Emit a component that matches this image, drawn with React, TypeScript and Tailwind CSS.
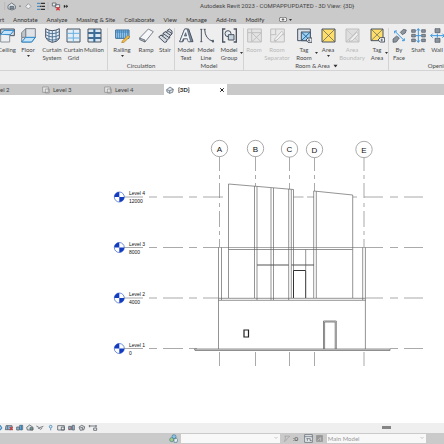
import type { ReactNode } from "react"
import { X } from "lucide-react"

type Tool = {
    label: string[]
    width: string
    icon: ReactNode
    arrow?: "below" | "side"
    disabled?: boolean
}

const Svg = ({ children }: { children: ReactNode }) => (
    <svg viewBox="0 0 45 45" className="size-[15px] shrink-0" fill="none" stroke="#4b5563" strokeWidth="3" aria-hidden="true">
        {children}
    </svg>
)

const CeilingIcon = () => (
    <Svg>
        <path d="M2 3h41v20H2z" fill="#d5dbe1" />
        <path d="M12 7h30L31 20H2z" fill="#c5e4fa" stroke="#2583c9" />
        <path d="M2 20v22h27V22" fill="#eef0f2" stroke="#8b929a" />
    </Svg>
)

const FloorIcon = () => (
    <Svg>
        <path d="M14 2h29v26L32 42H2V29l12-3z" fill="#dfe3e7" stroke="#7d858e" />
        <path d="M14 2v26H2V14z" fill="#bfc5cb" stroke="#7d858e" />
        <path d="M14 28h29L32 42H2z" fill="#c5e4fa" stroke="#2583c9" />
    </Svg>
)

const CurtainSystemIcon = () => (
    <Svg>
        <path d="M2 2q19 12 41 0v30q-8 11-22 11Q6 40 2 28z" fill="#e4eef7" />
        <path d="M12 6v32M22 8v35M33 6v34M2 11q19 12 41 0M2 20q19 13 41 1M4 30q17 12 38 1" stroke="#3f6487" strokeWidth="2.5" />
    </Svg>
)

const CurtainGridIcon = () => (
    <Svg>
        <path d="M3 3h39v39H3z" fill="#e3edf5" />
        <path d="M22 3v39M3 16h39M3 30h39" stroke="#68afe0" />
    </Svg>
)

const MullionIcon = () => (
    <Svg>
        <path d="M3 3h39v39H3z" fill="#dce8f1" />
        <path d="M22 3v39" stroke="#2e6c9e" strokeWidth="6" />
        <path d="M3 15h39M3 30h39" stroke="#486078" strokeWidth="6" />
        <path d="M5 15h35M5 30h35" stroke="#318ad0" strokeWidth="2" />
    </Svg>
)

const RailingIcon = () => (
    <Svg>
        <path d="M2 6h40v25H2z" fill="#9fcbed" stroke="#386a95" />
        <path d="M8 6v25M14 6v25M20 6v25M26 6v25M32 6v25M38 6v25M2 12h40" stroke="#377eb5" strokeWidth="2.5" />
        <path d="m22 39 17-17 5 5-17 16-7 1z" fill="#f4bd45" stroke="#a57a25" strokeWidth="2" />
    </Svg>
)

const RampIcon = () => (
    <Svg>
        <path d="M2 30 28 3l15 8-25 31z" fill="#f6f7f8" stroke="#7d858e" />
        <path d="m2 30 16 6v6L2 35z" fill="#aab3bd" strokeWidth="2" />
    </Svg>
)

const StairIcon = () => (
    <Svg>
        <path d="m2 27 7-6 6 3v-8l7-5 5 3V8l7-5 8 6v9l-7 6v6l-7 5-3 7-6 1z" fill="#d4dae0" />
        <path d="m9 21 17 13M15 16l18 13M22 11l17 12M28 7l14 10" />
    </Svg>
)

const ModelTextIcon = () => (
    <Svg>
        <path d="M2 41 17 3h12l13 38H30l-2-9H15l-3 9z" fill="#7a8c9f" />
        <path d="M2 41 17 3h7l11 38h-8l-2-9H13l-4 9zM16 24h7l-3-10z" fill="#f1f5f8" strokeWidth="2" />
    </Svg>
)

const ModelLineIcon = () => (
    <Svg>
        <path d="M7 4v37M17 4q1 30 26 36" />
        <path d="M4 4h6M4 41h6M14 4h6M40 37h4v5h-4z" />
    </Svg>
)

const ModelGroupIcon = () => (
    <Svg>
        <path d="M10 3H2v39h8M35 3h8v39h-8" strokeWidth="4" />
        <circle cx="18" cy="17" r="9" fill="#e5ebf0" />
        <path d="M19 20h17v16H19z" fill="#c8d4de" />
    </Svg>
)

const RoomIcon = () => (
    <Svg>
        <g stroke="#bfbfbf">
            <path d="M2 3h41v39H2z" fill="#e4e4e4" />
            <path d="M14 3v39M2 14h12M14 14h29M15 15l27 26M42 15 15 41" />
        </g>
    </Svg>
)

const RoomSeparatorIcon = () => (
    <Svg>
        <g stroke="#bfbfbf">
            <path d="M2 3h41v39H2z" fill="#e8e8e8" />
            <path d="M17 3v17M2 20h17M27 20h16M17 30v12" />
            <path d="m15 32 20-22 6 5-20 21-8 3z" fill="#f4f4f4" />
        </g>
    </Svg>
)

const TagRoomIcon = () => (
    <Svg>
        <path d="M2 3h38v35H2z" fill="#dce2e7" />
        <path d="M13 12h27v26H13z" fill="#9bd1f5" />
        <path d="m13 12 27 26M40 12 13 38" stroke="#286590" />
        <path d="m27 36 6-6h12v13H33z" fill="#f5f5f5" />
        <circle cx="36" cy="37" r="2" />
    </Svg>
)

const AreaIcon = () => (
    <Svg>
        <path d="M3 3h39v39H3z" fill="#ffdf69" />
        <path d="m3 3 39 39M42 3 3 42" strokeWidth="2" />
    </Svg>
)

const AreaBoundaryIcon = () => (
    <Svg>
        <g stroke="#bfbfbf">
            <path d="M3 3h39v39H3z" fill="#dedede" />
            <path d="m3 3 39 39M42 3 3 42" strokeWidth="2" />
            <path d="m15 34 20-21 6 5-19 20-9 3z" fill="#f2f2f2" />
        </g>
    </Svg>
)

const TagAreaIcon = () => (
    <Svg>
        <path d="M3 3h36v35H3z" fill="#ffdf69" />
        <path d="m3 3 36 35M39 3 3 38" strokeWidth="2" />
        <path d="m24 36 7-7h13v13H31z" fill="#f5f5f5" />
        <circle cx="35" cy="36" r="2" />
    </Svg>
)

const ByFaceIcon = () => (
    <Svg>
        <path d="m25 13 9-9 9 2-3 9-9 5zM3 33l11-9 8 6-9 12-10 1z" fill="#8c949c" strokeWidth="2" />
        <path d="m9 10 27 27M8 9h7M8 9v7M37 38h-7M37 38v-7" stroke="#3a96df" />
    </Svg>
)

const ShaftIcon = () => (
    <Svg>
        <path d="M2 5h11v8H2zM2 19h11v8H2zM2 33h11v8H2zM32 5h11v8H32zM32 19h11v8H32zM32 33h11v8H32z" fill="#8c949c" strokeWidth="2" />
        <path d="M22 2v41M17 8l5-6 5 6M17 37l5 6 5-6M14 23h17" stroke="#3a96df" />
    </Svg>
)

const WallIcon = () => (
    <Svg>
        <path d="M15 2h15v12H15zM15 31h15v12H15z" fill="#8c949c" strokeWidth="2" />
        <path d="M2 23h41M8 17l-6 6 6 6M37 17l6 6-6 6M22 17v12" stroke="#3a96df" />
    </Svg>
)

const build: Tool[] = [
    { label: ["Ceiling"], width: "w-[22px]", icon: <CeilingIcon /> },
    { label: ["Floor"], width: "w-5", icon: <FloorIcon />, arrow: "below" },
    { label: ["Curtain", "System"], width: "w-7", icon: <CurtainSystemIcon /> },
    { label: ["Curtain", "Grid"], width: "w-[15px]", icon: <CurtainGridIcon /> },
    { label: ["Mullion"], width: "w-[26px]", icon: <MullionIcon /> },
]

const circulation: Tool[] = [
    { label: ["Railing"], width: "w-7", icon: <RailingIcon />, arrow: "below" },
    { label: ["Ramp"], width: "w-5", icon: <RampIcon /> },
    { label: ["Stair"], width: "w-[18px]", icon: <StairIcon /> },
]

const model: Tool[] = [
    { label: ["Model", "Text"], width: "w-[22px]", icon: <ModelTextIcon /> },
    { label: ["Model", "Line"], width: "w-[18px]", icon: <ModelLineIcon /> },
    { label: ["Model", "Group"], width: "w-7", icon: <ModelGroupIcon />, arrow: "side" },
]

const roomArea: Tool[] = [
    { label: ["Room"], width: "w-5", icon: <RoomIcon />, disabled: true },
    { label: ["Room", "Separator"], width: "w-[26px]", icon: <RoomSeparatorIcon />, disabled: true },
    { label: ["Tag", "Room"], width: "w-7", icon: <TagRoomIcon />, arrow: "side" },
    { label: ["Area"], width: "w-5", icon: <AreaIcon />, arrow: "below" },
    { label: ["Area", "Boundary"], width: "w-7", icon: <AreaBoundaryIcon />, disabled: true },
    { label: ["Tag", "Area"], width: "w-[22px]", icon: <TagAreaIcon />, arrow: "side" },
]

const opening: Tool[] = [
    { label: ["By", "Face"], width: "w-5", icon: <ByFaceIcon /> },
    { label: ["Shaft"], width: "w-[18px]", icon: <ShaftIcon /> },
    { label: ["Wall"], width: "w-5", icon: <WallIcon /> },
    { label: ["Vertical"], width: "w-[42px]", icon: <ShaftIcon /> },
]

function Arrow({ className = "" }: { className?: string }) {
    return (
        <svg viewBox="0 0 6 4" className={`h-[2px] w-[3px] ${className}`} fill="#333" aria-hidden="true">
            <path d="M0 0h6L3 4z" />
        </svg>
    )
}

function ToolButton({ tool }: { tool: Tool }) {
    return (
        <button
            type="button"
            disabled={tool.disabled}
            className={`relative flex shrink-0 flex-col items-center ${tool.width} ${tool.disabled ? "text-[#b9b9b9]" : "text-[#4a4a4a]"}`}
        >
            {tool.icon}
            <span className="mt-[3px] flex flex-col items-center whitespace-nowrap">
                {tool.label.map((line) => (
                    <span key={line}>{line}</span>
                ))}
            </span>
            {tool.arrow === "below" && <Arrow className="mt-px" />}
            {tool.arrow === "side" && <Arrow className="absolute right-0 top-6" />}
        </button>
    )
}

function Panel({ title, tools, more }: { title: string; tools: Tool[]; more?: boolean }) {
    return (
        <section className="flex shrink-0 flex-col border-r border-[#d3d3d3]">
            <div className="flex h-[35px] items-start">
                {tools.map((tool) => (
                    <ToolButton key={tool.label.join(" ")} tool={tool} />
                ))}
            </div>
            <h2 className="flex h-2 items-center justify-center gap-1 text-[#4a4a4a]">
                {title}
                {more && <Arrow className="scale-150" />}
            </h2>
        </section>
    )
}

function QuickAccess() {
    return (
        <svg viewBox="0 0 210 36" className="h-3 w-[70px] shrink-0" fill="none" stroke="#59636e" strokeWidth="2.5" aria-hidden="true">
            <path d="M14 6v24M144 6v24" stroke="#aaa" strokeWidth="1.5" />
            <path d="m24 17 11-8 11 8v9l-10 4-12-4z" fill="#e4e9ed" />
            <path d="M30 19h11v7H30z" fill="#7e91a2" />
            <path d="M57 17h6l-3 4z" fill="#444" stroke="none" />
            <path d="m77 19 8-8 8 8-8 8z" fill="#f0f0f0" stroke="#8d949b" />
            <path d="M111 10h9M111 19h9M111 28h9" stroke="#3a83bd" strokeWidth="3" />
            <path d="M122 10h13M124 19h-4M125 19h10M122 28h13" stroke="#333" strokeWidth="4" />
            <path d="M157 9h11v9h-11zM166 14h13v9h-13z" fill="#eee" />
            <path d="m169 22 10 9M179 22l-10 9" stroke="#d9383d" strokeWidth="4" />
            <path d="m192 15 5 4-5 4zM199 15l5 4-5 4z" fill="#222" stroke="#222" strokeWidth="1" />
        </svg>
    )
}

const menu = ["Insert", "Annotate", "Analyze", "Massing & Site", "Collaborate", "View", "Manage", "Add-Ins", "Modify"]

const sheets = ["Level 2", "Level 3", "Level 4"]

const levels = [
    { name: "Level 4", elevation: "12000", y: 197 },
    { name: "Level 3", elevation: "8000", y: 247.5 },
    { name: "Level 2", elevation: "4000", y: 298 },
    { name: "Level 1", elevation: "0", y: 348.5 },
]

const grids = [
    { name: "A", x: 219.5, y: 148.5 },
    { name: "B", x: 255.5, y: 148.5 },
    { name: "C", x: 289.5, y: 149 },
    { name: "D", x: 314.5, y: 149.5 },
    { name: "E", x: 364, y: 149.5 },
]

function Elevation() {
    return (
        <svg viewBox="0 95 444 328" className="w-full" fill="none" stroke="#858585" strokeWidth="0.7" role="img" aria-label="3D view">
            {levels.map(({ name, elevation, y }) => (
                <g key={name}>
                    <path d={`M124 ${y}h19M149 ${y}h8M163 ${y}h20M189 ${y}h8M390 ${y}h8M404 ${y}h19`} />
                    <circle cx="119.3" cy={y} r="5" fill="#fff" stroke="#3b62c9" />
                    <path
                        d={`M119.3 ${y}v-5a5 5 0 0 0-5 5zM119.3 ${y}v5a5 5 0 0 0 5-5z`}
                        fill="#123cc0"
                        stroke="none"
                    />
                    <g fill="#111" stroke="none" fontSize="5" fontFamily="Liberation Sans, Arial, sans-serif">
                        <text x="129" y={y - 2}>{name}</text>
                        <text x="129" y={y + 6}>{elevation}</text>
                    </g>
                </g>
            ))}
            <path d="M203 197h20M293.5 197h10M307 197h7M353 197h4M364 197h19M203 247.5h180M203 298h15M366 298h17" />

            {grids.map(({ name, x, y }) => (
                <g key={name}>
                    <circle cx={x} cy={y} r="8.2" />
                    <path d={`M${x} ${y + 8.2}V171M${x} 175v4M${x} 352v14`} />
                    <text x={x} y={y + 3} textAnchor="middle" fill="#111" stroke="none" fontSize="8" fontFamily="Liberation Sans, Arial, sans-serif">
                        {name}
                    </text>
                </g>
            ))}
            <path d="M219.5 183v15M219.5 203v4M219.5 211v16M219.5 231v4M219.5 239v8M364 183v15M364 203v4M364 211v16M364 231v4M364 239v8" />
            <path d="M255.5 183v3M289.5 183v6M314.5 183v8" />

            {/* upper volumes */}
            <path d="M228.5 298V184l65 5.5V298M254.5 186v112M257 186.5V300M271 188v112M273.5 188v112M288.7 189v111M291.3 189.5V298" stroke="#666" />
            <path d="M313.7 298V191l39 4v103M316.3 191.3V298M305.7 249.5V270M228.5 249.5h124" stroke="#666" />
            <path d="M257 265h31.7M291.3 265H314" stroke="#555" strokeWidth="1.1" />
            <path d="M293.5 298v-27.5h12.2V298" stroke="#333" strokeWidth="1" />

            {/* ground floor */}
            <path d="M218.5 349V247.5M221.5 247.5V300M362.7 247.5V300M365.4 247.5V349M218.5 298.3h147M218.5 300.3h147" stroke="#666" />
            <path d="M323.5 349v-28h12.8v28M324.6 349v-27h10.6v27" stroke="#555" />
            <path d="M244 330h4.5v7H244z" stroke="#222" strokeWidth="1.2" />
            <path d="M194.5 349H390v1.5H195z" fill="#ddd" stroke="#666" />
        </svg>
    )
}

function ViewControls() {
    return (
        <svg viewBox="0 0 300 27" className="h-[9px] w-[100px]" fill="none" stroke="#5c646c" strokeWidth="2.5" aria-hidden="true">
            <path d="M0 7l5 8-5 6" stroke="#448dc4" strokeWidth="4" />
            <path d="M18 8h18v12H16zM23 8v12" fill="#8dbde0" />
            <path d="m29 12 9 9M38 12l-9 9" stroke="#c6403f" strokeWidth="3.5" />
            <path d="M50 12h8v9h-8zM59 7h9v13h-9z" fill="#8dbde0" />
            <path d="M64 6v16" stroke="#3585c0" strokeWidth="4" />
            <path d="m80 13 9-7 10 7v8H82z" fill="#dce5e8" />
            <path d="M90 20v-6h8v7z" fill="#6eaa98" />
            <path d="m109 9 9 5 12-4M114 18c4-7 8 8 12-4" />
            <circle cx="152" cy="11" r="4" fill="#ddecf7" stroke="#4587b6" />
            <path d="M152 16v6" stroke="#4587b6" />
            <path d="M173 8h20v13h-20zM184 12h9v9h-9z" fill="#ececec" />
            <path d="M206 10h9v10h-9zM217 7h6v14h-6z" fill="#91bada" />
            <path d="m208 20 6-8" stroke="#c6403f" />
            <path d="m237 12 8-5 9 4-2 9-11 2zM241 14h7v6" fill="#ddd" />
            <path d="M266 9h24M269 6v7M288 6v7M281 15h9v7h-9z" />
        </svg>
    )
}

function SheetIcon() {
    return (
        <svg viewBox="0 0 24 24" className="size-2 shrink-0" fill="#e7e7e7" stroke="#888" strokeWidth="2" aria-hidden="true">
            <path d="M2 3h17v16H2zM10 9h12v12H10z" />
        </svg>
    )
}

function StatusSelect({ label, options }: { label: string; options: string[] }) {
    return (
        <div className="relative min-w-0 flex-1">
            <select
                aria-label={label}
                className="block h-[9px] w-full appearance-none bg-[#f8f8f8] pl-px text-[6px] leading-[9px] text-[#999] outline-none"
            >
                {options.map((option) => (
                    <option key={option}>{option}</option>
                ))}
            </select>
            <svg viewBox="0 0 8 8" className="pointer-events-none absolute right-0.5 top-0.5 size-1" fill="none" stroke="#999" aria-hidden="true">
                <path d="m1 2 3 3 3-3" />
            </svg>
        </div>
    )
}

export default function App() {
    return (
        <div className="flex h-screen flex-col overflow-hidden bg-white font-[Lato,'Open_Sans',sans-serif] text-[6px] leading-[8px]">
            <header className="shrink-0 bg-[#cacaca] text-[#333]">
                <div className="flex h-[15px] items-start">
                    <QuickAccess />
                    <h1 className="ml-[130px] mt-0.5 whitespace-nowrap font-[Roboto,sans-serif] text-[#444]">
                        Autodesk Revit 2023 - COMPAPPUPDATED - 3D View: {"{3D}"}
                    </h1>
                </div>
                <nav className="-ml-[11px] flex h-[9px] items-center gap-[9px] whitespace-nowrap">
                    {menu.map((item) => (
                        <button key={item} type="button">{item}</button>
                    ))}
                    <button type="button" aria-label="Ribbon display" className="ml-1.5 flex items-center gap-0.5">
                        <svg viewBox="0 0 24 15" className="h-[5px] w-2" fill="#eee" stroke="#555" strokeWidth="2" aria-hidden="true">
                            <rect x="1" y="1" width="22" height="13" rx="5" />
                            <circle cx="12" cy="7.5" r="2.5" fill="#555" />
                        </svg>
                        <Arrow />
                    </button>
                </nav>
            </header>

            <div className="flex h-[47px] shrink-0 overflow-hidden border-b border-[#d3d3d3] bg-[#eeeeee] pt-1">
                <div className="-ml-1 flex">
                    <Panel title="" tools={build} />
                    <Panel title="Circulation" tools={circulation} />
                    <Panel title="Model" tools={model} />
                    <Panel title="Room & Area" tools={roomArea} more />
                    <Panel title="Opening" tools={opening} />
                </div>
            </div>
            <div className="h-[13px] shrink-0 bg-[#eeeeee]" />

            <div className="flex h-[11px] shrink-0 bg-[#c9c9c9] text-[#444]">
                <div className="-ml-[22px] flex">
                    {sheets.map((sheet) => (
                        <button key={sheet} type="button" className="flex w-[62px] items-center gap-[3px] pl-0.5">
                            <SheetIcon />
                            {sheet}
                        </button>
                    ))}
                </div>
                <div className="flex w-[63px] items-center bg-white px-0.5 font-bold text-[#222]">
                    <svg viewBox="0 0 24 24" className="size-2" fill="#dbe4ec" stroke="#4d5965" strokeWidth="2" aria-hidden="true">
                        <path d="m2 11 10-8 10 7-2 9-9 3-8-4zM2 11l9 3 11-4M11 14v8" />
                    </svg>
                    <button type="button" className="ml-1 flex-1 text-left">{"{3D}"}</button>
                    <button type="button" aria-label="Close view">
                        <X className="size-[6px]" strokeWidth={4} />
                    </button>
                </div>
            </div>

            <main className="min-h-0 flex-1 overflow-hidden bg-white">
                <Elevation />
            </main>

            <div className="flex h-[10px] shrink-0 items-center justify-between bg-[#efefef] pb-0.5 pr-[53px]">
                <ViewControls />
                <div className="h-[3px] w-[9px] bg-[#858585]" />
            </div>

            <footer className="flex h-[11px] shrink-0 items-center bg-[#cacaca] pl-[38%] pr-[18px] text-[#333]">
                <svg viewBox="0 0 27 27" className="mr-[3px] size-[9px] shrink-0" fill="#8bc2df" stroke="#477b9b" strokeWidth="2" aria-hidden="true">
                    <circle cx="15" cy="8" r="6" />
                    <circle cx="8" cy="17" r="6" fill="#a4cf78" />
                    <path d="M15 25V14h6v-3l5 6-2 8z" fill="#eee" />
                </svg>
                <StatusSelect label="Active workset" options={[""]} />
                <svg viewBox="0 0 27 27" className="ml-[3px] size-2 shrink-0" fill="none" stroke="#9b9b9b" strokeWidth="2" aria-hidden="true">
                    <path d="M5 4h18l-9 9-7 9M8 4v9l-4 10" />
                </svg>
                <span className="ml-0.5">:0</span>
                <svg viewBox="0 0 27 27" className="ml-[6px] size-[9px] shrink-0" fill="#eee" stroke="#4d5b68" strokeWidth="2" aria-hidden="true">
                    <path d="M2 2h23v23H2zM2 8h23M7 14h10M10 14v7M18 12v8h5" />
                </svg>
                <svg viewBox="0 0 24 24" className="ml-[3px] mr-1 size-[7px] shrink-0" fill="#999" stroke="#888" strokeWidth="2" aria-hidden="true">
                    <path d="M2 2h20v20H2z" />
                    <path d="m5 19 8-8M16 8v12" stroke="#ddd" />
                </svg>
                <StatusSelect label="Design option" options={["Main Model"]} />
            </footer>
        </div>
    )
}
